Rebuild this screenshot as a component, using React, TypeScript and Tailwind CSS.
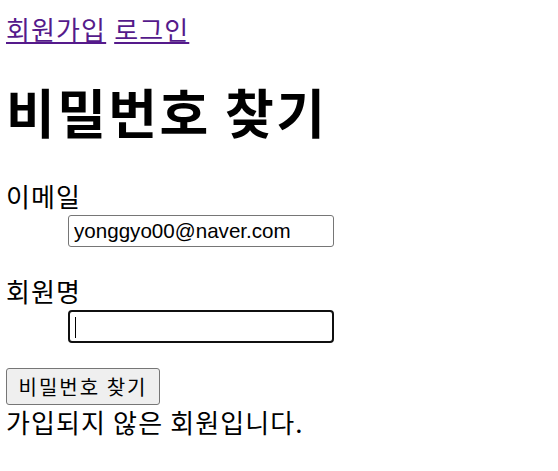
const font = { fontFamily: '"Noto Sans CJK KR", "Liberation Sans", sans-serif' };
const latin = { fontFamily: '"Liberation Sans", Arial, sans-serif' };

export default function App() {
  return (
    <div className="bg-white min-h-[471px] px-[6px] text-black tracking-[0.07em]" style={font}>
      <nav className="pt-[14px] text-[26px] leading-[30px] flex gap-[8px]">
        <a href="#" className="text-[#551a8b] underline">회원가입</a>
        <a href="#" className="text-[#551a8b] underline">로그인</a>
      </nav>
      <h1 className="mt-[38px] text-[53px] leading-[58px] font-bold tracking-[0.045em]">비밀번호 찾기</h1>
      <dl className="mt-[41px]">
        <dt className="text-[26px] leading-[30px]">이메일</dt>
        <dd className="mt-[4px] ml-[62px]">
          <input
            type="text"
            defaultValue="yonggyo00@naver.com"
            className="w-[266px] h-[32px] border border-[#767676] rounded-[3px] px-[5px] text-[20.6px] tracking-normal text-black outline-none"
            style={latin}
          />
        </dd>
        <dt className="mt-[29px] text-[26px] leading-[30px]">회원명</dt>
        <dd className="mt-[4px] ml-[62px]">
          <div className="relative w-[266px] h-[33px] border-2 border-[#101010] rounded-[4px]">
            <input
              type="text"
              className="w-full h-full px-[5px] text-[20px] tracking-normal outline-none bg-transparent"
              style={latin}
            />
            <span className="absolute left-[5px] top-[5px] w-px h-[21px] bg-black" />
          </div>
        </dd>
      </dl>
      <button className="mt-[25px] block w-[154px] h-[37px] bg-[#efefef] border border-[#767676] rounded-[3px] text-[20px] leading-none tracking-[0.1em]">
        비밀번호 찾기
      </button>
      <p className="mt-[2px] text-[26px] leading-[30px]">가입되지 않은 회원입니다.</p>
    </div>
  );
}
